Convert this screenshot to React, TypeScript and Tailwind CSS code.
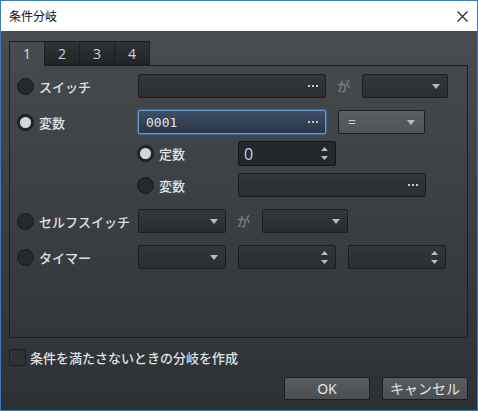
import React from "react";

const jp = { fontFamily: '"Noto Sans CJK JP", "Noto Sans", sans-serif' };

function Dots() {
  return (
    <div className="flex gap-[2px] items-center">
      <span className="w-[2px] h-[2px] bg-[#c4c8cc]" />
      <span className="w-[2px] h-[2px] bg-[#c4c8cc]" />
      <span className="w-[2px] h-[2px] bg-[#c4c8cc]" />
    </div>
  );
}

function Down() {
  return (
    <svg width="8" height="5" viewBox="0 0 8 5">
      <path d="M0 0 H8 L4 5 Z" fill="#b9bcbf" />
    </svg>
  );
}

function Spin() {
  return (
    <div className="flex flex-col gap-[5px] items-center">
      <svg width="7" height="4" viewBox="0 0 7 4">
        <path d="M0 4 H7 L3.5 0 Z" fill="#b9bcbf" />
      </svg>
      <svg width="7" height="4" viewBox="0 0 7 4">
        <path d="M0 0 H7 L3.5 4 Z" fill="#b9bcbf" />
      </svg>
    </div>
  );
}

function Radio({ on }: { on?: boolean }) {
  return (
    <div className="w-[17px] h-[17px] rounded-full bg-[#26292c] border border-[#17191b] flex items-center justify-center shrink-0">
      {on && <div className="w-[11px] h-[11px] rounded-full bg-[#d4d6d8]" />}
    </div>
  );
}

function Label({ children }: { children: React.ReactNode }) {
  return (
    <span className="text-[13px] font-medium text-[#dfe2e5] leading-none" style={jp}>
      {children}
    </span>
  );
}

function Field({ w, children, right }: { w: string; children?: React.ReactNode; right?: React.ReactNode }) {
  return (
    <div
      className={`${w} h-[24px] rounded-[2px] border border-[#1a1c1e] bg-gradient-to-b from-[#33373a] to-[#2b2e31] flex items-center justify-between pl-[7px] pr-[7px] shrink-0`}
    >
      <div>{children}</div>
      {right}
    </div>
  );
}

export default function App() {
  return (
    <div className="w-[478px] h-[411px] border border-[#3b79b9] flex flex-col overflow-hidden">
      <div className="h-[30px] bg-white flex items-center justify-between pl-[8px] pr-[9px] shrink-0">
        <span className="text-[12px] text-[#111] leading-none" style={jp}>
          条件分岐
        </span>
        <svg width="11" height="11" viewBox="0 0 11 11">
          <path d="M0.5 0.5 L10.5 10.5 M10.5 0.5 L0.5 10.5" stroke="#222" strokeWidth="1.1" />
        </svg>
      </div>
      <div className="flex-1 bg-gradient-to-b from-[#494d50] to-[#2e3134] flex flex-col pl-[8px] pr-[9px] pt-[9px]">
        {/* tabs */}
        <div className="flex h-[25px] items-end relative z-10">
          <div className="w-[36px] h-[25px] border border-b-0 border-[#1b1d1f] bg-[#474b4e] flex items-center justify-center text-[14px] text-[#d6dde4] mb-[-1px] pb-[1px]" style={{ fontFamily: '"Open Sans", sans-serif' }}>
            1
          </div>
          {["2", "3", "4"].map((t) => (
            <div
              key={t}
              className="w-[35px] h-[24px] border border-l-0 border-[#1b1d1f] bg-gradient-to-b from-[#2f3336] to-[#222528] flex items-center justify-center text-[14px] text-[#c9d2da]"
              style={{ fontFamily: '"Open Sans", sans-serif' }}
            >
              {t}
            </div>
          ))}
        </div>
        {/* panel */}
        <div className="h-[273px] border border-[#1b1d1f] bg-gradient-to-b from-[#46494c] to-[#33363a] flex flex-col pl-[7px] pt-[8px]">
          {/* row 1 */}
          <div className="flex items-center h-[24px]">
            <div className="w-[121px] flex items-center gap-[5px]">
              <Radio />
              <Label>スイッチ</Label>
            </div>
            <Field w="w-[188px]" right={<Dots />} />
            <span className="ml-[11px] w-[25px] text-[13px] font-medium text-[#7c8186]" style={jp}>
              が
            </span>
            <Field w="w-[86px]" right={<Down />} />
          </div>
          {/* row 2 */}
          <div className="flex items-center h-[26px] mt-[11px]">
            <div className="w-[121px] flex items-center gap-[5px]">
              <Radio on />
              <Label>変数</Label>
            </div>
            <div className="w-[188px] h-[24px] rounded-[2px] border border-[#6a9ad0] ring-1 ring-[#3d6a9c] bg-gradient-to-b from-[#3d5068] to-[#2b3646] flex items-center justify-between pl-[7px] pr-[7px]">
              <span className="text-[13px] text-[#dfe5eb] leading-none" style={{ fontFamily: '"DejaVu Sans Mono", monospace' }}>
                0001
              </span>
              <Dots />
            </div>
            <div className="ml-[12px] w-[87px] h-[24px] rounded-[2px] border border-[#1a1c1e] bg-gradient-to-b from-[#5b5f62] to-[#505457] flex items-center justify-between pl-[9px] pr-[9px]">
              <span className="text-[14px] text-[#cfd3d6] leading-none" style={{ fontFamily: '"Noto Sans", sans-serif' }}>
                =
              </span>
              <Down />
            </div>
          </div>
          {/* row 3 */}
          <div className="flex items-center h-[25px] mt-[6px] pl-[120px]">
            <div className="w-[101px] flex items-center gap-[5px]">
              <Radio on />
              <Label>定数</Label>
            </div>
            <div className="w-[98px] h-[25px] rounded-[2px] border border-[#141618] bg-[#25282b] flex items-center justify-between pl-[5px] pr-[7px]">
              <span className="text-[16px] text-[#c3d3e4] leading-none" style={{ fontFamily: '"Open Sans", sans-serif' }}>
                0
              </span>
              <Spin />
            </div>
          </div>
          {/* row 4 */}
          <div className="flex items-center h-[24px] mt-[7px] pl-[120px]">
            <div className="w-[101px] flex items-center gap-[5px]">
              <Radio />
              <Label>変数</Label>
            </div>
            <Field w="w-[188px]" right={<Dots />} />
          </div>
          {/* row 5 */}
          <div className="flex items-center h-[24px] mt-[12px]">
            <div className="w-[121px] flex items-center gap-[5px]">
              <Radio />
              <Label>セルフスイッチ</Label>
            </div>
            <Field w="w-[88px]" right={<Down />} />
            <span className="ml-[11px] w-[25px] text-[13px] font-medium text-[#7c8186]" style={jp}>
              が
            </span>
            <Field w="w-[86px]" right={<Down />} />
          </div>
          {/* row 6 */}
          <div className="flex items-center h-[24px] mt-[12px]">
            <div className="w-[121px] flex items-center gap-[5px]">
              <Radio />
              <Label>タイマー</Label>
            </div>
            <Field w="w-[88px]" right={<Down />} />
            <div className="ml-[12px]">
              <Field w="w-[98px]" right={<Spin />} />
            </div>
            <div className="ml-[12px]">
              <Field w="w-[98px]" right={<Spin />} />
            </div>
          </div>
        </div>
        {/* checkbox */}
        <div className="flex items-center gap-[4px] mt-[11px]">
          <div className="w-[17px] h-[17px] rounded-[2px] border border-[#1b1d1f] bg-[#2f3235]" />
          <Label>条件を満たさないときの分岐を作成</Label>
        </div>
        {/* buttons */}
        <div className="flex justify-end gap-[12px] mt-[11px]">
          <div className="w-[86px] h-[23px] rounded-[2px] border border-[#1b1d1f] bg-gradient-to-b from-[#585c5f] to-[#4b4f52] flex items-center justify-center text-[14px] text-[#e2e5e8]" style={{ fontFamily: '"Noto Sans", "Noto Sans CJK JP", sans-serif' }}>
            OK
          </div>
          <div className="w-[86px] h-[23px] rounded-[2px] border border-[#1b1d1f] bg-gradient-to-b from-[#585c5f] to-[#4b4f52] flex items-center justify-center text-[14px] text-[#e2e5e8]" style={jp}>
            キャンセル
          </div>
        </div>
      </div>
    </div>
  );
}
